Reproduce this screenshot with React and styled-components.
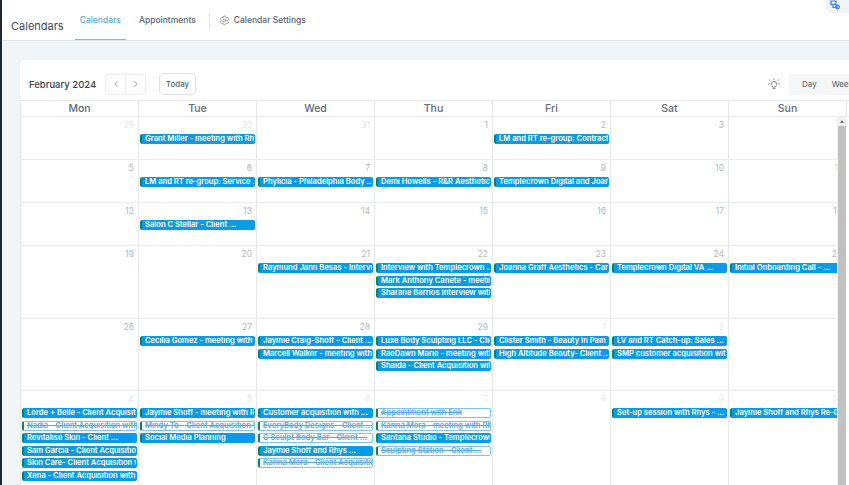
import React from 'react';
import styled, { createGlobalStyle } from 'styled-components';
import { ChevronLeft, ChevronRight, Settings } from 'lucide-react';

const GlobalStyle = createGlobalStyle`
    html, body {
        margin: 0;
        height: 100%;
        overflow: hidden;
        background: #f1f5f8;
        font-family: Inter, "Noto Sans", sans-serif;
    }
`;

const Page = styled.div`
    width: 849px;
    height: 485px;
    overflow: hidden;
    box-sizing: border-box;
    border-left: 2px solid #1f2733;
    background: #f1f5f8;
`;

const TopBar = styled.header`
    height: 41px;
    box-sizing: border-box;
    background: #fff;
    border-bottom: 1px solid #dfe3e8;
    display: flex;
    justify-content: space-between;
    align-items: flex-start;
    padding-left: 9px;
`;

const Nav = styled.nav`
    display: flex;
    align-items: center;
    height: 40px;
`;

const Title = styled.div`
    font-size: 11px;
    color: #3f4754;
    margin-right: 11px;
    padding-top: 13px;
    height: 27px;
    box-sizing: border-box;
    line-height: 27px;
    margin-top: -14px;
`;

const Tab = styled.a`
    height: 40px;
    box-sizing: border-box;
    padding: 0 5px;
    margin-right: 8px;
    display: flex;
    align-items: center;
    font-size: 8.5px;
    font-weight: 500;
    color: ${props => (props.$active ? '#5aa9e0' : '#596271')};
    border-bottom: ${props => (props.$active ? '1px solid #7dbce8' : '1px solid transparent')};
`;

const Divider = styled.div`
    width: 1px;
    height: 15px;
    background: #e2e5e9;
    margin: 0 9px 0 0;
`;

const SettingsLink = styled.a`
    display: flex;
    align-items: center;
    gap: 4px;
    font-size: 8.5px;
    font-weight: 500;
    color: #596271;
`;

const HelpPill = styled.div`
    width: 24px;
    height: 13px;
    background: #eef3fd;
    border-bottom-left-radius: 7px;
    display: flex;
    align-items: flex-start;
    padding: 0 0 0 5px;
    box-sizing: border-box;
    color: #3b7ddd;
`;

const Card = styled.section`
    margin: 19px 0 0 18px;
    width: 840px;
    background: #fff;
    border-radius: 4px 0 0 0;
`;

const Toolbar = styled.div`
    height: 40px;
    box-sizing: border-box;
    display: flex;
    align-items: center;
    padding: 8px 0 0 9px;
`;

const Month = styled.div`
    font-size: 9.5px;
    font-weight: 500;
    color: #39424f;
    width: 76px;
`;

const Arrows = styled.div`
    display: flex;
    width: 41px;
    height: 21px;
    box-sizing: border-box;
    border: 1px solid #edeff3;
    border-radius: 4px;
    color: #5b6472;
`;

const Arrow = styled.div`
    flex: 1;
    display: flex;
    align-items: center;
    justify-content: center;
    & + & {
        border-left: 1px solid #edeff3;
    }
`;

const TodayButton = styled.div`
    margin-left: 13px;
    width: 37px;
    height: 22px;
    box-sizing: border-box;
    border: 1px solid #dfe2ea;
    border-radius: 5px;
    font-size: 8px;
    font-weight: 500;
    color: #5b6472;
    display: flex;
    align-items: center;
    justify-content: center;
`;

const Right = styled.div`
    margin-left: auto;
    display: flex;
    align-items: center;
    gap: 9px;
`;

const Bulb = styled.div`
    color: #6b7380;
    display: flex;
`;

const Toggle = styled.div`
    width: 58px;
    height: 21px;
    background: #f5f6f8;
    display: flex;
    align-items: center;
    gap: 15px;
    padding-left: 13px;
    font-size: 8px;
    color: #4d5665;
    overflow: hidden;
    white-space: nowrap;
`;

const HeadRow = styled.div`
    display: grid;
    grid-template-columns: repeat(7, 118px);
    height: 17px;
    box-sizing: border-box;
    border-top: 1px solid #e6e8ea;
    border-bottom: 1px solid #e9ebed;
    border-left: 1px solid #e6e8ea;
`;

const HeadCell = styled.div`
    border-right: 1px solid #e6e8ea;
    font-size: 10.5px;
    font-weight: 500;
    color: #5d6b7d;
    text-align: center;
    line-height: 15px;
`;

const Body = styled.div`
    display: flex;
    align-items: flex-start;
`;

const Viewport = styled.div`
    width: 816px;
    height: 369px;
    overflow: hidden;
    border-left: 1px solid #e6e8ea;
    box-sizing: content-box;
`;

const Week = styled.div`
    display: grid;
    grid-template-columns: repeat(7, 118px);
    height: ${props => props.$height}px;
    box-sizing: border-box;
    border-bottom: 1px solid #eaecee;
`;

const Cell = styled.div`
    border-right: 1px solid #e6e8ea;
    padding: 0 1px 0 1px;
    min-width: 0;
`;

const DayNumber = styled.div`
    height: 17px;
    font-size: 8.5px;
    line-height: 13px;
    text-align: right;
    padding: 2px 3px 0 0;
    box-sizing: border-box;
    color: ${props => (props.$muted ? '#e6e8ee' : '#b3b8c4')};
`;

const EventList = styled.div`
    display: flex;
    flex-direction: column;
    gap: 2.6px;
`;

const Event = styled.div`
    height: 10px;
    box-sizing: border-box;
    border-radius: 2px;
    border: ${props => (props.$cancelled ? '1px solid #7cc4ef' : '1px solid #0b9ae6')};
    border-left: 2px solid #13805a;
    background: ${props => (props.$cancelled ? '#fff' : '#0b9ae6')};
    color: ${props => (props.$cancelled ? '#5aa9e6' : '#fff')};
    text-decoration: ${props => (props.$cancelled ? 'line-through' : 'none')};
    font-size: 7.6px;
    font-weight: 600;
    line-height: 8px;
    padding-left: 3px;
    white-space: nowrap;
    overflow: hidden;
`;

const Scrollbar = styled.div`
    width: 9px;
    height: 369px;
    background: #f1f1f1;
    display: flex;
    flex-direction: column;
    align-items: center;
`;

const ScrollArrow = styled.div`
    height: 9px;
    display: flex;
    align-items: center;
    justify-content: center;
    &::before {
        content: '';
        border-left: 2.5px solid transparent;
        border-right: 2.5px solid transparent;
        border-bottom: 3px solid #6f6f6f;
    }
`;

const ScrollThumb = styled.div`
    width: 8px;
    flex: 1;
    background: #c1c1c1;
`;

const DAYS = ['Mon', 'Tue', 'Wed', 'Thu', 'Fri', 'Sat', 'Sun'];

const c = title => ({ title, cancelled: true });

const WEEKS = [
    {
        height: 43,
        cells: [
            { day: 29, muted: true },
            { day: 30, muted: true, events: ['Grant Miller - meeting with Rhy...'] },
            { day: 31, muted: true },
            { day: 1 },
            { day: 2, events: ['LM and RT re-group: Contract ...'] },
            { day: 3 },
            { day: 4 },
        ],
    },
    {
        height: 43,
        cells: [
            { day: 5 },
            { day: 6, events: ['LM and RT re-group: Service ...'] },
            { day: 7, events: ['Phylicia - Philadelphia Body ...'] },
            { day: 8, events: ['Demi Howells - R&R Aesthetics ...'] },
            { day: 9, events: ['Templecrown Digital and Joann...'] },
            { day: 10 },
            { day: 11 },
        ],
    },
    {
        height: 43,
        cells: [
            { day: 12 },
            { day: 13, events: ['Salon C Stellar - Client ...'] },
            { day: 14 },
            { day: 15 },
            { day: 16 },
            { day: 17 },
            { day: 18 },
        ],
    },
    {
        height: 73,
        cells: [
            { day: 19 },
            { day: 20 },
            { day: 21, events: ['Raymund Jann Besas - Intervie...'] },
            {
                day: 22,
                events: [
                    'Interview with Templecrown ...',
                    'Mark Anthony Canete - meeting...',
                    'Sharane Barrios Interview with ...',
                ],
            },
            { day: 23, events: ['Joanna Graff Aesthetics - Cardi...'] },
            { day: 24, events: ['Templecrown Digital VA ...'] },
            { day: 25, events: ['Initial Onboarding Call - ...'] },
        ],
    },
    {
        height: 72,
        cells: [
            { day: 26 },
            { day: 27, events: ['Cecilia Gomez - meeting with ...'] },
            { day: 28, events: ['Jaymie Craig-Shoff - Client ...', 'Marcell Walker - meeting with ...'] },
            {
                day: 29,
                events: [
                    'Luxe Body Sculpting LLC - Clien...',
                    'RaeDawn Marie - meeting with ...',
                    'Shaida - Client Acquisition with ...',
                ],
            },
            { day: 1, muted: true, events: ['Clister Smith - Beauty In Pain ...', 'High Altitude Beauty- Client ...'] },
            { day: 2, muted: true, events: ['LV and RT Catch-up: Sales ...', 'SMP customer acquisition with ...'] },
            { day: 3, muted: true },
        ],
    },
    {
        height: 96,
        cells: [
            {
                day: 4,
                muted: true,
                events: [
                    'Lorde + Belle - Client Acquisitio...',
                    c('Nadia - Client Acquisition with ...'),
                    'Revitalise Skin - Client ...',
                    'Sam Garcia - Client Acquisition ...',
                    'Skin Care- Client Acquisition wi...',
                    'Xena - Client Acquisition with ...',
                ],
            },
            {
                day: 5,
                muted: true,
                events: [
                    'Jaymie Shoff - meeting with Rh...',
                    c('Mindy To - Client Acquisition wi...'),
                    'Social Media Planning',
                ],
            },
            {
                day: 6,
                muted: true,
                events: [
                    'Customer acquisition with ...',
                    c('EveryBody Designs - Client ...'),
                    c('G Sculpt Body Bar - Client ...'),
                    'Jaymie Shoff and Rhys ...',
                    c('Karina Mora - Client Acquisition ...'),
                ],
            },
            {
                day: 7,
                muted: true,
                events: [
                    c('Appointment with Erik'),
                    c('Karina Mora - meeting with Rhy...'),
                    'Santana Studio - Templecrown ...',
                    c('Sculpting Station - Client ...'),
                ],
            },
            { day: 8, muted: true },
            { day: 9, muted: true, events: ['Set-up session with Rhys - ...'] },
            { day: 10, muted: true, events: ['Jaymie Shoff and Rhys Re-Group ...'] },
        ],
    },
];

const BulbIcon = () => (
    <svg width="12" height="12" viewBox="0 0 12 12" fill="none" stroke="currentColor" strokeWidth="0.8" strokeLinecap="round">
        <path d="M4.3 8.2C3.5 7.6 3.2 6.9 3.2 6.1a2.8 2.8 0 0 1 5.6 0c0 .8-.3 1.5-1.1 2.1v.9H4.3z" />
        <path d="M4.8 10.6h2.4M6 .6v1M1.4 2l.7.7M10.6 2l-.7.7M.4 6h1M10.6 6h1" />
    </svg>
);

const PillIcon = () => (
    <svg width="10" height="10" viewBox="0 0 10 10" fill="none" stroke="currentColor" strokeWidth="1.2">
        <path d="M1 1h5v3.500H1zM3 4.500v3h4V5.500" />
        <circle cx="7.500" cy="7" r="1.800" />
    </svg>
);

const App = () => (
    <Page>
        <GlobalStyle />
        <TopBar>
            <Nav>
                <Title>Calendars</Title>
                <Tab $active>Calendars</Tab>
                <Tab>Appointments</Tab>
                <Divider />
                <SettingsLink>
                    <Settings size={11} strokeWidth={1.2} />
                    Calendar Settings
                </SettingsLink>
            </Nav>
            <HelpPill>
                <PillIcon />
            </HelpPill>
        </TopBar>
        <Card>
            <Toolbar>
                <Month>February 2024</Month>
                <Arrows>
                    <Arrow>
                        <ChevronLeft size={10} strokeWidth={1.4} />
                    </Arrow>
                    <Arrow>
                        <ChevronRight size={10} strokeWidth={1.4} />
                    </Arrow>
                </Arrows>
                <TodayButton>Today</TodayButton>
                <Right>
                    <Bulb>
                        <BulbIcon />
                    </Bulb>
                    <Toggle>
                        <span>Day</span>
                        <span>Week</span>
                    </Toggle>
                </Right>
            </Toolbar>
            <HeadRow>
                {DAYS.map(day => (
                    <HeadCell key={day}>{day}</HeadCell>
                ))}
            </HeadRow>
            <Body>
                <Viewport>
                    {WEEKS.map(week => (
                        <Week key={week.cells[0].day} $height={week.height}>
                            {week.cells.map(cell => (
                                <Cell key={cell.day}>
                                    <DayNumber $muted={cell.muted}>{cell.day}</DayNumber>
                                    <EventList>
                                        {(cell.events || []).map(event => {
                                            const title = event.title || event;
                                            return (
                                                <Event key={title} $cancelled={event.cancelled}>
                                                    {title}
                                                </Event>
                                            );
                                        })}
                                    </EventList>
                                </Cell>
                            ))}
                        </Week>
                    ))}
                </Viewport>
                <Scrollbar>
                    <ScrollArrow />
                    <ScrollThumb />
                </Scrollbar>
            </Body>
        </Card>
    </Page>
);

export default App;
